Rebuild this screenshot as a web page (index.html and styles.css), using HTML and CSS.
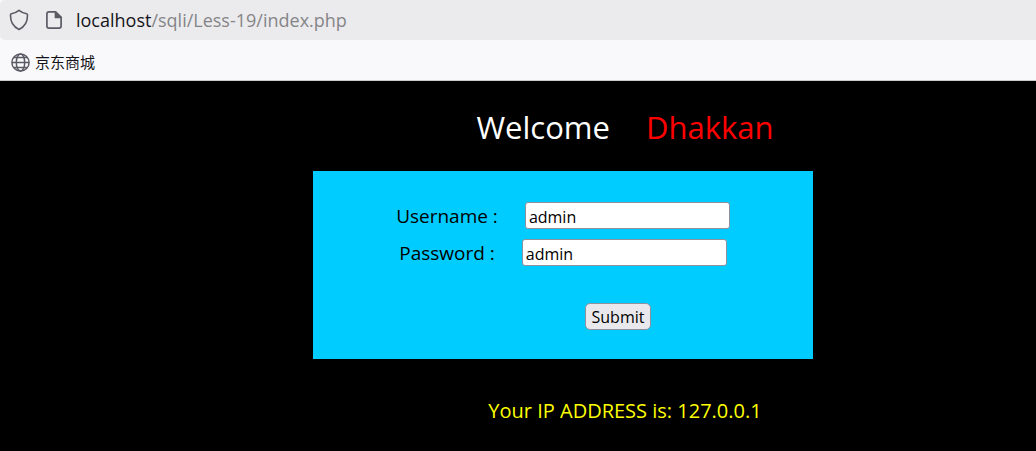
FILE: index.html
```html
<!doctype html>
<html lang="en">
<head>
  <meta charset="utf-8">
  <meta name="viewport" content="width=device-width,initial-scale=1">
  <title>Less-19</title>
  <link rel="stylesheet" href="styles.css">
</head>
<body>

  <header class="browser">
    <div class="urlbar">
      <svg class="icon" width="20" height="22" viewBox="0 0 20 22" fill="none" stroke="#5b5b66" stroke-width="1.6" stroke-linejoin="round">
        <path d="M10 1.400 Q13.500 4.200 17.600 4.800 Q18.600 5 18.500 6.200 C18.600 13 15.600 17.800 10 20.400 C4.400 17.800 1.400 13 1.500 6.200 Q1.400 5 2.400 4.800 Q6.500 4.200 10 1.400 Z"/>
      </svg>
      <svg class="icon" width="18" height="20" viewBox="0 0 18 20" fill="none" stroke="#5b5b66" stroke-width="1.7" stroke-linejoin="round">
        <path d="M4 1.900 H10.500 L16.100 7.400 V16 Q16.100 18.100 14 18.100 H4 Q1.900 18.100 1.900 16 V4 Q1.900 1.900 4 1.900 Z"/>
        <path d="M10.500 2 V7.400 H16 Z" fill="#5b5b66"/>
      </svg>
      <span class="url">localhost<span class="path">/sqli/Less-19/index.php</span></span>
    </div>
    <nav class="bookmarks">
      <a href="#">
        <svg width="20" height="20" viewBox="0 0 20 20" fill="none" stroke="#5b5b66" stroke-width="1.5">
          <circle cx="10.500" cy="10.500" r="8.600"/>
          <ellipse cx="10.500" cy="10.500" rx="4.200" ry="8.600"/>
          <path d="M2 10.500 H19 M4 5.500 H17 M4 15.500 H17"/>
        </svg>
        <span>京东商城</span>
      </a>
    </nav>
  </header>

  <main>
    <h1>Welcome <span>Dhakkan</span></h1>

    <form class="login">
      <div class="row">
        <label for="uname">Username :</label>
        <input id="uname" name="uname" type="text" value="admin">
      </div>
      <div class="row">
        <label for="passwd">Password :</label>
        <input id="passwd" name="passwd" type="text" value="admin">
      </div>
      <div class="actions">
        <button type="submit">Submit</button>
      </div>
    </form>

    <p class="ip">Your IP ADDRESS is: 127.0.0.1</p>
  </main>

</body>
</html>
```
FILE: styles.css
```css
body {
  margin:0;
  background:#000;
  font-family:"Open Sans","Noto Sans CJK SC",sans-serif;
}

/* browser bars */
.browser{
  background:#f9f9fb;
  border-bottom:1px solid #ccc;
}
.urlbar{
  display:flex; align-items:center; height:40px; padding-left:9px;
  background:#ebebed; border-radius:5px 0 0 5px;
}
.icon{ margin-right:16px; }
.icon + .icon{ margin-right:13px; }
.url{ font-size:18px; color:#15141a; }
.path{ color:#858588; }
.bookmarks{ display:flex; align-items:center; height:40px; padding:4px 0 0 10px; box-sizing:border-box; }
.bookmarks a{
  display:flex; align-items:center; gap:5px;
  font:15px/20px "Noto Sans CJK SC",sans-serif;
  color:#15141a; text-decoration:none;
}

/* page */
main{ padding-left:90px; }
h1, .ip{ margin:0; padding-left:124px; text-align:center; font-weight:400; }
h1{
  display:flex; justify-content:center; gap:36px;
  padding-top:24px; height:66px;
  font-size:31px; line-height:44px; color:#fff;
}
h1 span{ color:#f00; }
.login{
  box-sizing:border-box; width:500px; max-width:100%;
  margin:0 auto; padding:31px 0 29px;
  background:#0cf; color:#000;
}
.row{
  display:flex; justify-content:center; align-items:flex-end; gap:27px;
  margin-bottom:10px;
  font-size:19px; line-height:25px;
}
input, button{
  box-sizing:border-box; height:27px; color:#000;
  font:16px/20px "Open Sans",sans-serif;
  border:1px solid #8f8f9d;
}
input{ width:205px; padding:2px 3px 0; border-radius:3px; background:#fff; }
.actions{ display:flex; justify-content:center; padding:27px 0 0 110px; }
button{ padding:1px 6px 0; border-radius:5px; background:#e9e9ed; }
.ip{ padding-top:37px; font-size:20px; line-height:30px; color:#ff0; }
```
